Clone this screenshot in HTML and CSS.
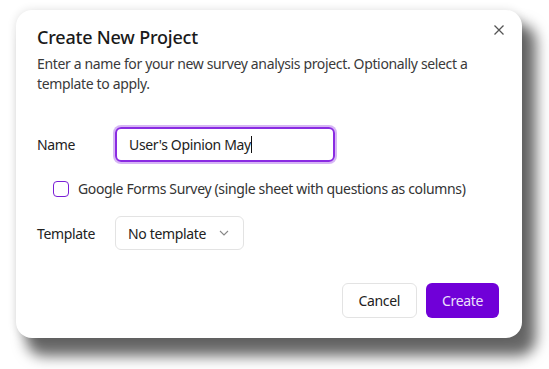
FILE: index.html
```html
<!DOCTYPE html>
<html lang="en">
<head>
    <meta charset="UTF-8">
    <meta name="viewport" content="width=device-width, initial-scale=1.0">
    <title>Create New Project</title>
    <link rel="stylesheet" href="styles.css">
</head>
<body>
    <div class="backdrop">
        <div class="dialog">
            <button class="close-btn" aria-label="Close">
                <svg width="12" height="12" viewBox="0 0 12 12">
                    <path d="M1.5 1.5 L10.5 10.5 M10.5 1.5 L1.5 10.5" stroke="#555" stroke-width="1.3" fill="none"/>
                </svg>
            </button>

            <h2 class="title">Create New Project</h2>
            <p class="description">Enter a name for your new survey analysis project. Optionally select a template to apply.</p>

            <form class="project-form">
                <div class="form-row">
                    <label for="name">Name</label>
                    <div class="name-field">User's Opinion May<span class="caret"></span></div>
                </div>

                <div class="check-row">
                    <span class="checkbox"></span>
                    <span>Google Forms Survey (single sheet with questions as columns)</span>
                </div>

                <div class="form-row">
                    <label>Template</label>
                    <div class="select">
                        <span>No template</span>
                        <svg width="10" height="6" viewBox="0 0 10 6">
                            <path d="M1 1 L5 5 L9 1" stroke="#888" stroke-width="1.1" fill="none"/>
                        </svg>
                    </div>
                </div>

                <div class="actions">
                    <button type="button" class="btn btn-cancel">Cancel</button>
                    <button type="button" class="btn btn-create">Create</button>
                </div>
            </form>
        </div>
    </div>
</body>
</html>
```

FILE: styles.css
```css
body {
    font-family: "Noto Sans", "Open Sans", sans-serif;
    margin: 0;
    padding: 0;
    background-color: #ffffff;
    color: #1f1f1f;
    letter-spacing: -0.35px;
}

.backdrop {
    box-sizing: border-box;
    width: 549px;
    height: 369px;
    padding: 10px 0 0 16px;
    overflow: hidden;
}

.dialog {
    position: relative;
    box-sizing: border-box;
    width: 506px;
    height: 328px;
    padding: 14px 23px 20px 21px;
    background-color: #ffffff;
    border-radius: 16px;
    box-shadow: 12px 16px 14px 2px rgba(0, 0, 0, 0.6), 0 0 10px rgba(0, 0, 0, 0.12);
}

.close-btn {
    position: absolute;
    top: 12px;
    right: 15px;
    width: 16px;
    height: 16px;
    padding: 0;
    border: none;
    background: none;
    display: flex;
    align-items: center;
    justify-content: center;
}

.title {
    margin: 0;
    font-size: 18px;
    font-weight: 500;
    line-height: 26px;
    color: #1a1a1a;
    letter-spacing: -0.2px;
}

.description {
    margin: 4px 0 0;
    font-size: 14px;
    line-height: 20px;
    color: #3a3a3a;
}

.project-form {
    margin-top: 33px;
    font-size: 14px;
}

.form-row {
    display: flex;
    align-items: center;
}

.form-row label {
    width: 78px;
    color: #222;
}

.name-field {
    box-sizing: border-box;
    width: 220px;
    height: 35px;
    padding: 0 12px;
    display: flex;
    align-items: center;
    border: 2px solid #8a2be2;
    border-radius: 6px;
    box-shadow: 0 0 0 2px rgba(138, 43, 226, 0.35);
    color: #222;
}

.caret {
    display: inline-block;
    width: 1px;
    height: 17px;
    background-color: #111;
}

.check-row {
    display: flex;
    align-items: center;
    gap: 9px;
    margin: 17px 0 18px 16px;
    color: #333;
}

.checkbox {
    box-sizing: border-box;
    width: 16px;
    height: 16px;
    border: 1.5px solid #7a1fd6;
    border-radius: 4px;
}

.select {
    box-sizing: border-box;
    width: 129px;
    height: 34px;
    padding: 0 14px 0 12px;
    display: flex;
    align-items: center;
    justify-content: space-between;
    border: 1px solid #e3e3e3;
    border-radius: 6px;
    color: #222;
}

.actions {
    display: flex;
    justify-content: flex-end;
    gap: 9px;
    margin-top: 33px;
}

.btn {
    height: 35px;
    padding: 0 16px;
    font-family: inherit;
    font-size: 14px;
    letter-spacing: inherit;
    border-radius: 6px;
    cursor: pointer;
}

.btn-cancel {
    background-color: #ffffff;
    border: 1px solid #e3e3e3;
    color: #222;
}

.btn-create {
    background-color: #7000d8;
    border: none;
    color: #ece0fb;
}

.btn-create:hover {
    background-color: #5f00b8;
}
```
